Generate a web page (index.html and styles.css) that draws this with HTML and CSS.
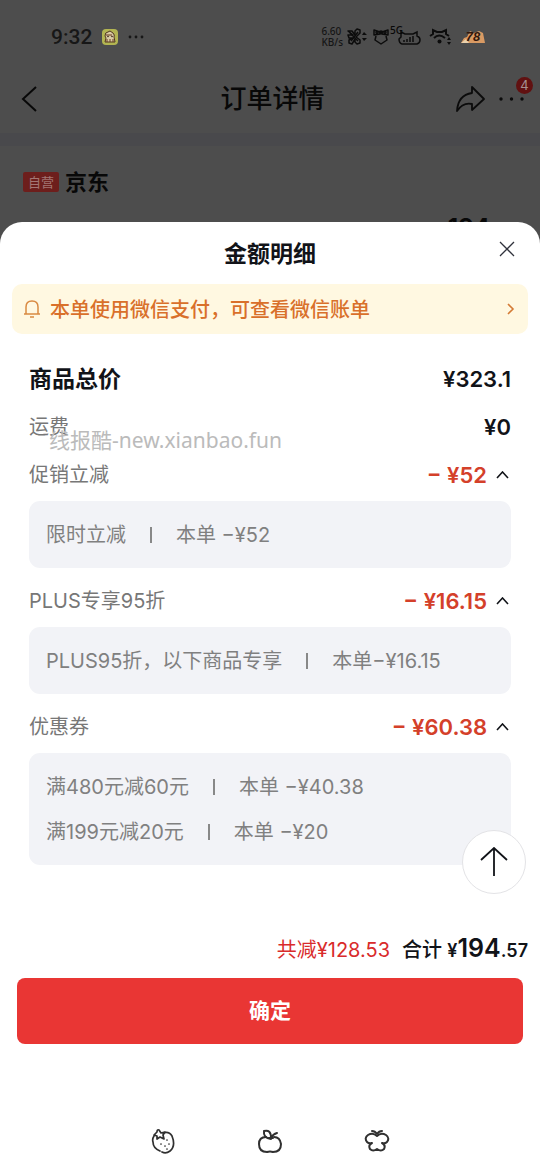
FILE: index.html
```html
<!DOCTYPE html>
<html lang="zh-CN">
<head>
<meta charset="utf-8">
<meta name="viewport" content="width=device-width, initial-scale=1">
<title>订单详情</title>
<link rel="stylesheet" href="styles.css">
</head>
<body>
<div class="backdrop">
  <div class="status">
    <span class="clock">9:32</span>
    <svg class="app-icon" width="16" height="16" viewBox="0 0 16 16"><rect width="16" height="16" rx="4" fill="#b3b552"/><path d="M3 7Q3 3 6 3L8 2L11 4Q13 6 12 8L13 13H3L4 9Z" fill="#d9cba5" stroke="#513620"/><path d="M4 6H10M5 10V13M8 10V13M11 10V13" stroke="#6b3d20"/><circle cx="6" cy="7.500" r=".8" fill="#301b10"/><circle cx="10" cy="7.500" r=".8" fill="#301b10"/></svg>
    <svg width="16" height="4" viewBox="0 0 16 4" fill="#171717"><circle cx="2" cy="2" r="1.400"/><circle cx="8" cy="2" r="1.400"/><circle cx="14" cy="2" r="1.400"/></svg>
    <div class="system">
      <span class="speed">6.60<br>KB/s</span>
      <svg width="20" height="18" viewBox="0 0 20 18" fill="none" stroke="#0c0c0c" stroke-width="1.500" stroke-linejoin="round"><path d="M1 3L5 3L8 7V3L10 1L13 2V5L9 9L13 12V15L10 16L8 14V11L5 16L2 15V12L6 10H2L1 7H6Z"/><path d="M3 5L11 13M11 4L4 13"/><path d="M15 7L17 4L20 7ZM15 10L17 13L20 10Z" fill="#0c0c0c" stroke="none"/></svg>
      <svg class="alarm" width="16" height="18" viewBox="0 0 16 18" fill="none" stroke="#0c0c0c" stroke-width="1.500" stroke-linejoin="round"><path d="M7 4L1 2V7L7 6M9 4L15 2V7L9 6M3 8L2 12L5 14L8 16L11 14L14 12L13 8"/><circle cx="8" cy="4.500" r="1.500" fill="#0c0c0c"/><circle cx="4" cy="4.500" r="1"/><circle cx="12" cy="4.500" r="1"/></svg>
      <span class="signal"><span class="generation">5G</span><svg width="23" height="15" viewBox="0 0 23 15" fill="none" stroke="#0c0c0c" stroke-width="1.500"><path d="M4 14Q1 13 1 9L3 7V2L7 4H15L19 2V6Q22 7 22 10Q22 13 19 14Z"/><path d="M6 12V10M9 12V9M12 12V7M15 12V6"/></svg></span>
      <svg class="wifi" width="23" height="18" viewBox="0 0 23 18" fill="none" stroke="#0c0c0c" stroke-width="2"><path d="M1 8L4 6V2L8 4H13L17 2V6L20 8M5 10Q10 5 16 10"/><circle cx="10.500" cy="13.500" r="2" fill="#0c0c0c" stroke="none"/><path d="M18 12L20 9L22 12ZM18 14L20 17L22 14Z" fill="#0c0c0c" stroke="none"/></svg>
      <span class="battery"><svg width="26" height="14" viewBox="0 0 26 14"><path d="M1 13L4 8L7 7L10 1L14 3L19 1L23 3L25 13Z" fill="#d99a63"/><path d="M1 13L6 9L9 13Z" fill="#ead2ad"/></svg><span class="level">78</span></span>
    </div>
  </div>
  <header class="topbar">
    <button class="plain" aria-label="返回"><svg width="18" height="28" viewBox="0 0 18 28" fill="none" stroke="#080808" stroke-width="2"><path d="M16 2L3 14L16 26"/></svg></button>
    <h1 class="page-title">订单详情</h1>
    <div class="actions">
      <button class="plain" aria-label="分享"><svg width="30" height="28" viewBox="0 0 30 28" fill="none" stroke="#0b0b0b" stroke-width="1.800" stroke-linejoin="round"><path d="M16 2L28 14L16 25V19Q7 17 1 26Q2 10 16 8Z"/></svg></button>
      <button class="plain more" aria-label="更多"><svg width="26" height="4" viewBox="0 0 26 4" fill="#0b0b0b"><circle cx="2" cy="2" r="1.700"/><circle cx="12.500" cy="2" r="1.700"/><circle cx="23" cy="2" r="1.700"/></svg><span class="badge">4</span></button>
    </div>
  </header>
  <div class="store"><span class="tag">自营</span><span>京东</span></div>
  <div class="order-price">194</div>
</div>

<main class="sheet">
  <div class="sheet-head">
    <h2 class="sheet-title">金额明细</h2>
    <button class="plain close" aria-label="关闭"><svg width="16" height="16" viewBox="0 0 16 16" stroke="#30323c" stroke-width="1.300"><path d="M1 1L15 15M15 1L1 15"/></svg></button>
  </div>
  <a class="notice" href="#bill">
    <svg width="16" height="20" viewBox="0 0 16 20" fill="none" stroke="#d98a42" stroke-width="1.500"><path d="M0 15H16M2 15V8Q2 2 8 2Q14 2 14 8V15M6 18H10"/></svg>
    <span class="notice-text">本单使用微信支付，可查看微信账单</span>
    <svg width="8" height="12" viewBox="0 0 8 12" fill="none" stroke="#d47b35" stroke-width="1.600"><path d="M1 1L6 6L1 11"/></svg>
  </a>

  <section class="details">
    <div class="row total-row"><span>商品总价</span><span class="amount">¥323.1</span></div>
    <div class="row"><span>运费</span><span class="amount">¥0</span><span class="watermark">线报酷-new.xianbao.fun</span></div>

    <div class="row"><span>促销立减</span><button class="plain amount cut">− ¥52<svg width="13" height="8" viewBox="0 0 13 8"><path d="M1 7L6.500 1L12 7"/></svg></button></div>
    <div class="panel">
      <div class="item"><span>限时立减</span><i class="bar"></i><span>本单 −¥52</span></div>
    </div>

    <div class="row"><span>PLUS专享95折</span><button class="plain amount cut">− ¥16.15<svg width="13" height="8" viewBox="0 0 13 8"><path d="M1 7L6.500 1L12 7"/></svg></button></div>
    <div class="panel">
      <div class="item"><span>PLUS95折，以下商品专享</span><i class="bar"></i><span>本单−¥16.15</span></div>
    </div>

    <div class="row"><span>优惠券</span><button class="plain amount cut">− ¥60.38<svg width="13" height="8" viewBox="0 0 13 8"><path d="M1 7L6.500 1L12 7"/></svg></button></div>
    <div class="panel">
      <div class="item"><span>满480元减60元</span><i class="bar"></i><span>本单 −¥40.38</span></div>
      <div class="item"><span>满199元减20元</span><i class="bar"></i><span>本单 −¥20</span></div>
    </div>
    <button class="to-top" aria-label="回到顶部"><svg width="30" height="30" viewBox="0 0 30 30" fill="none" stroke="#111318" stroke-width="1.800"><path d="M15 29V1M2 13L15 1L28 13"/></svg></button>
  </section>

  <div class="summary">
    <span class="saved">共减¥128.53</span>
    <span class="total">合计 <b class="sum">¥<span class="sum-big">194</span>.57</b></span>
  </div>
  <button class="confirm">确定</button>

  <nav class="system-nav">
    <button class="plain" aria-label="最近任务"><svg width="28" height="28" viewBox="0 0 28 28" fill="none" stroke="#303030" stroke-width="1.700" stroke-linecap="round" stroke-linejoin="round"><path d="M14 6Q20 4 23 9Q27 19 21 24Q17 27 13 25M11 24Q4 21 4 15Q3 12 5 9"/><path d="M8 5Q8 2 10 3L12 6L16 5L14 8L15 12L11 10L8 12L8 9L5 8Z"/><path d="M12 17V17M18 13V13M16 19V19M20 17V17M18 22V22"/></svg></button>
    <button class="plain" aria-label="主屏幕"><svg width="28" height="28" viewBox="0 0 28 28" fill="none" stroke="#303030" stroke-width="2" stroke-linecap="round" stroke-linejoin="round"><path d="M10 10Q3 10 3 17Q3 25 11 25Q14 24 17 25Q25 25 25 17Q24 10 18 10"/><path d="M15 12Q7 11 8 4Q15 2 15 11Q17 7 21 6M13 11H17"/></svg></button>
    <button class="plain" aria-label="返回上一级"><svg width="28" height="28" viewBox="0 0 28 28" fill="none" stroke="#303030" stroke-width="2" stroke-linecap="round" stroke-linejoin="round"><path d="M9 4Q12 4 14 7Q16 4 19 4"/><path d="M14 9Q10 5 5 8Q1 11 4 15Q6 17 9 16Q5 18 7 22Q10 25 14 22Q18 25 21 22Q23 18 19 16Q22 17 24 15Q27 11 23 8Q18 5 14 9Z"/></svg></button>
  </nav>
</main>
</body>
</html>
```
FILE: styles.css
```css
* {
  box-sizing: border-box;
}

body {
  margin: 0;
  min-height: 100vh;
  display: flex;
  flex-direction: column;
  background: #4d4d4d;
  color: #111318;
  font: 20px/28px Inter, "Noto Sans CJK SC", sans-serif;
}

svg {
  display: block;
  flex: none;
}

.plain {
  display: block;
  padding: 0;
  border: 0;
  background: none;
  color: inherit;
  font: inherit;
}

.backdrop {
  height: 246px;
  margin-bottom: -24px;
  color: #080808;
}

.status {
  display: flex;
  align-items: center;
  gap: 10px;
  height: 60px;
  padding: 14px 54px 0 51px;
}

.clock {
  font: 500 21px/28px Roboto, sans-serif;
  color: #171717;
}

.system {
  display: flex;
  align-items: center;
  gap: 4px;
  margin-left: auto;
}

.speed {
  font: 500 10px/11px "Noto Sans", sans-serif;
  color: #151515;
}

.signal {
  display: flex;
  align-items: flex-end;
  position: relative;
  padding-left: 5px;
}

.alarm {
  margin-left: 2px;
}

.wifi {
  margin-left: 4px;
}

.generation {
  position: absolute;
  top: -6px;
  left: -3px;
  font: 500 10px/12px "Noto Sans", sans-serif;
}

.battery {
  position: relative;
  margin-left: 4px;
}

.level {
  position: absolute;
  inset: 0;
  font: italic 700 13px/14px "Liberation Sans", sans-serif;
  text-align: center;
  color: #32170c;
}

.topbar {
  display: grid;
  grid-template-columns: 1fr auto 1fr;
  align-items: center;
  height: 86px;
  padding: 5px 15px 0 20px;
  border-bottom: 13px solid #49494c;
}

.page-title {
  margin: 0;
  font-size: 26px;
  line-height: 36px;
  font-weight: 500;
}

.actions {
  display: flex;
  justify-content: flex-end;
  align-items: center;
  gap: 13px;
}

.more {
  position: relative;
}

.badge {
  position: absolute;
  right: -8px;
  bottom: 7px;
  width: 17px;
  height: 17px;
  border-radius: 50%;
  background: #611111;
  color: #a59090;
  font-size: 13px;
  line-height: 17px;
  text-align: center;
}

.store {
  display: flex;
  align-items: center;
  gap: 6px;
  height: 72px;
  padding: 0 23px;
  font-size: 22px;
  font-weight: 600;
}

.tag {
  padding: 0 5px;
  border-radius: 2px;
  background: #6d1e1c;
  color: #a37674;
  font-size: 13px;
  line-height: 20px;
  font-weight: 400;
}

.order-price {
  padding-right: 50px;
  text-align: right;
  font-size: 24px;
  line-height: 20px;
  font-weight: 700;
}

.sheet {
  position: relative;
  flex: 1;
  display: flex;
  flex-direction: column;
  border-radius: 22px 22px 0 0;
  background: #fff;
}

.sheet-head {
  display: grid;
  grid-template-columns: 1fr auto 1fr;
  align-items: center;
  height: 62px;
  padding: 2px 25px 0;
}

.sheet-title {
  grid-column: 2;
  margin: 0;
  font-size: 23px;
  line-height: 32px;
  font-weight: 700;
}

.close {
  justify-self: end;
  padding-bottom: 10px;
}

.notice {
  display: flex;
  align-items: center;
  gap: 10px;
  min-height: 50px;
  margin: 0 12px;
  padding: 0 13px 0 12px;
  border-radius: 10px;
  background: #fff8e1;
  color: #d9702a;
  text-decoration: none;
}

.notice-text {
  flex: 1;
  padding-top: 2px;
  font-weight: 500;
}

.details {
  position: relative;
  padding: 21px 29px 0;
}

.row {
  position: relative;
  display: flex;
  align-items: center;
  justify-content: space-between;
  height: 48px;
  color: #777;
}

.total-row {
  color: #111318;
  font-size: 23px;
  font-weight: 700;
}

.amount {
  color: #111318;
  font-size: 22px;
  font-weight: 600;
}

.cut {
  display: flex;
  align-items: center;
  gap: 9px;
  padding-right: 2px;
  color: #d4402a;
}

.cut path {
  fill: none;
  stroke: #111318;
  stroke-width: 1.600;
}

.watermark {
  position: absolute;
  left: 20px;
  top: 23px;
  font-family: "Noto Sans", "Noto Sans CJK SC", sans-serif;
  font-size: 21px;
  color: #bbb;
}

.panel {
  margin: 2px 0 9px;
  padding: 11px 17px;
  border-radius: 11px;
  background: #f2f3f7;
  color: #808080;
}

.item {
  display: flex;
  align-items: center;
  gap: 24px;
  min-height: 45px;
}

.bar {
  width: 2px;
  height: 16px;
  background: #888;
}

.to-top {
  position: absolute;
  right: 14px;
  bottom: -20px;
  display: grid;
  place-items: center;
  width: 64px;
  height: 64px;
  padding: 0;
  border: 1px solid #e3e3e6;
  border-radius: 50%;
  background: #fff;
}

.summary {
  display: flex;
  justify-content: flex-end;
  align-items: baseline;
  gap: 12px;
  margin-top: 60px;
  padding: 0 12px 13px;
}

.saved {
  color: #d92b2b;
}

.total {
  font-weight: 500;
}

.sum {
  font-size: 18px;
  font-weight: 600;
}

.sum-big {
  font-size: 25px;
}

.confirm {
  height: 66px;
  margin: 0 17px;
  border: 0;
  border-radius: 8px;
  background: #e93634;
  color: #fff;
  font: 700 21px/30px Inter, "Noto Sans CJK SC", sans-serif;
}

.system-nav {
  display: flex;
  justify-content: center;
  gap: 79px;
  margin-top: auto;
  padding: 16px 0 20px;
}
```
